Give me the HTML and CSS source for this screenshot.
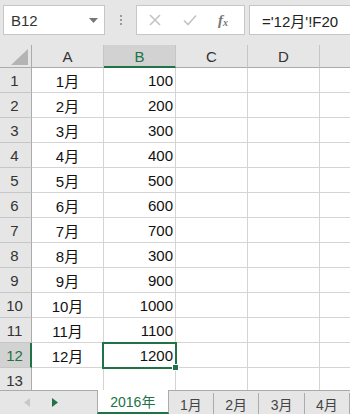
FILE: index.html
```html
<!DOCTYPE html>
<html lang="ja">
<head>
<meta charset="utf-8">
<link rel="stylesheet" href="styles.css">
</head>
<body>
<div class="app">
  <div class="toolbar">
    <div class="namebox">
      <span class="nb-text">B12</span>
      <svg class="nb-arrow" width="9" height="5" viewBox="0 0 9 5"><path d="M0 0H9L4.5 5Z" fill="#777"/></svg>
    </div>
    <div class="dots"><i></i><i></i><i></i></div>
    <div class="fbtns">
      <svg width="12" height="12" viewBox="0 0 12 12"><path d="M1 1L11 11M11 1L1 11" stroke="#c4c4c4" stroke-width="1.6"/></svg>
      <svg width="14" height="12" viewBox="0 0 14 12"><path d="M1 6.5L5 10.5L13 1.5" stroke="#c4c4c4" stroke-width="1.6" fill="none"/></svg>
      <span class="fx">f<sub>x</sub></span>
    </div>
    <div class="formula">='12月'!F20</div>
  </div>

  <div class="sheet">
    <div class="grid">
      <div class="corner"><svg width="17" height="16" viewBox="0 0 17 16"><path d="M17 0V16H0Z" fill="#b4b4b4"/></svg></div>
      <div class="ch">A</div>
      <div class="ch sel">B</div>
      <div class="ch">C</div>
      <div class="ch">D</div>
      <div class="ch last"></div>

      <div class="rh">1</div><div class="c ca">1月</div><div class="c cb">100</div><div class="c"></div><div class="c"></div><div class="c last"></div>
      <div class="rh">2</div><div class="c ca">2月</div><div class="c cb">200</div><div class="c"></div><div class="c"></div><div class="c last"></div>
      <div class="rh">3</div><div class="c ca">3月</div><div class="c cb">300</div><div class="c"></div><div class="c"></div><div class="c last"></div>
      <div class="rh">4</div><div class="c ca">4月</div><div class="c cb">400</div><div class="c"></div><div class="c"></div><div class="c last"></div>
      <div class="rh">5</div><div class="c ca">5月</div><div class="c cb">500</div><div class="c"></div><div class="c"></div><div class="c last"></div>
      <div class="rh">6</div><div class="c ca">6月</div><div class="c cb">600</div><div class="c"></div><div class="c"></div><div class="c last"></div>
      <div class="rh">7</div><div class="c ca">7月</div><div class="c cb">700</div><div class="c"></div><div class="c"></div><div class="c last"></div>
      <div class="rh">8</div><div class="c ca">8月</div><div class="c cb">300</div><div class="c"></div><div class="c"></div><div class="c last"></div>
      <div class="rh">9</div><div class="c ca">9月</div><div class="c cb">900</div><div class="c"></div><div class="c"></div><div class="c last"></div>
      <div class="rh">10</div><div class="c ca">10月</div><div class="c cb">1000</div><div class="c"></div><div class="c"></div><div class="c last"></div>
      <div class="rh">11</div><div class="c ca">11月</div><div class="c cb">1100</div><div class="c"></div><div class="c"></div><div class="c last"></div>
      <div class="rh sel">12</div><div class="c ca">12月</div><div class="c cb active">1200</div><div class="c"></div><div class="c"></div><div class="c last"></div>
      <div class="rh">13</div><div class="c ca"></div><div class="c cb"></div><div class="c"></div><div class="c"></div><div class="c last"></div>
    </div>
  </div>

  <div class="tabbar">
    <div class="nav">
      <svg width="6" height="9" viewBox="0 0 6 9"><path d="M6 0V9L0 4.5Z" fill="#c8c8c8"/></svg>
      <svg width="6" height="9" viewBox="0 0 6 9"><path d="M0 0V9L6 4.5Z" fill="#217346"/></svg>
    </div>
    <div class="tab active">2016年</div>
    <div class="tab">1月</div>
    <div class="tab">2月</div>
    <div class="tab">3月</div>
    <div class="tab">4月</div>
  </div>
</div>
</body>
</html>
```

FILE: styles.css
```css
* { box-sizing: border-box; }
html, body { margin: 0; padding: 0; }
body {
  width: 350px;
  height: 414px;
  overflow: hidden;
  background: #e6e6e6;
  font-family: "Liberation Sans", "Noto Sans CJK JP", sans-serif;
  color: #222;
}
.app { display: flex; flex-direction: column; height: 414px; }

.toolbar {
  height: 45px;
  display: flex;
  align-items: flex-start;
  padding: 5px 0 0 3px;
  background: #e6e6e6;
  flex: none;
}
.namebox {
  width: 102px;
  height: 30px;
  background: #fff;
  border: 1px solid #c6c6c6;
  display: flex;
  align-items: center;
  justify-content: space-between;
  padding: 0 6px 0 7px;
}
.nb-text { font-size: 15px; color: #333; }
.nb-arrow { margin-top: 1px; }
.dots {
  width: 31px;
  height: 30px;
  display: flex;
  flex-direction: column;
  align-items: center;
  justify-content: center;
  gap: 2px;
}
.dots i { display: block; width: 2px; height: 2px; background: #9a9a9a; }
.fbtns {
  width: 109px;
  height: 30px;
  background: #fff;
  border: 1px solid #c6c6c6;
  display: flex;
  align-items: center;
  justify-content: space-between;
  padding: 0 16px 0 12px;
}
.fx {
  font-family: "Liberation Serif", serif;
  font-style: italic;
  font-size: 15px;
  color: #777;
  font-weight: bold;
}
.fx sub { font-size: 10px; vertical-align: -1px; }
.formula {
  margin-left: 4px;
  flex: 1;
  height: 30px;
  background: #fff;
  border: 1px solid #c6c6c6;
  border-right: none;
  display: flex;
  align-items: center;
  padding-left: 12px;
  font-size: 15px;
  color: #222;
}

.sheet {
  height: 345px;
  overflow: hidden;
  background: #fff;
  flex: none;
}
.grid {
  display: grid;
  grid-template-columns: 32px 72px 72px 72px 72px 30px;
  grid-template-rows: 23px repeat(13, 25px);
  font-size: 15px;
}
.corner {
  background: #e6e6e6;
  border-right: 1px solid #ababab;
  border-bottom: 1px solid #ababab;
  display: flex;
  align-items: flex-end;
  justify-content: flex-end;
  padding: 0 3px 2px 0;
}
.ch {
  background: #e6e6e6;
  border-right: 1px solid #c6c6c6;
  border-bottom: 1px solid #ababab;
  display: flex;
  align-items: center;
  justify-content: center;
  color: #333;
}
.ch.sel {
  background: #d2d2d2;
  color: #217346;
  border-bottom: 2px solid #217346;
  padding-top: 1px;
}
.ch.last { border-right: none; }
.rh {
  background: #e6e6e6;
  border-right: 1px solid #ababab;
  border-bottom: 1px solid #c6c6c6;
  display: flex;
  align-items: center;
  justify-content: center;
  padding-right: 2px;
  color: #333;
}
.rh.sel {
  background: #d2d2d2;
  color: #217346;
  border-right: 2px solid #217346;
  padding-right: 1px;
}
.c {
  border-right: 1px solid #d4d4d4;
  border-bottom: 1px solid #d4d4d4;
  display: flex;
  align-items: center;
  color: #111;
}
.c.last { border-right: none; }
.ca { justify-content: center; }
.cb { justify-content: flex-end; padding-right: 2px; }
.cb.active { position: relative; }
.cb.active::before {
  content: "";
  position: absolute;
  left: -2px;
  top: -1px;
  right: -2px;
  bottom: -2px;
  border: 2px solid #217346;
}
.cb.active::after {
  content: "";
  position: absolute;
  right: -4px;
  bottom: -4px;
  width: 5px;
  height: 5px;
  background: #217346;
  border: 1px solid #fff;
}

.tabbar {
  height: 24px;
  display: flex;
  background: #e6e6e6;
  border-top: 1px solid #ababab;
  flex: none;
}
.nav {
  width: 98px;
  display: flex;
  align-items: center;
  padding-left: 24px;
  gap: 22px;
}
.tab {
  width: 46px;
  display: flex;
  align-items: center;
  justify-content: center;
  font-size: 14px;
  color: #444;
  border-right: 1px solid #ababab;
  margin: 2px 0 0 0;
}
.tab.active {
  width: 73px;
  margin: -1px 0 0 0;
  background: #fff;
  color: #217346;
  border-left: 1px solid #ababab;
  border-right: 1px solid #ababab;
  border-bottom: 2px solid #217346;
}
```
